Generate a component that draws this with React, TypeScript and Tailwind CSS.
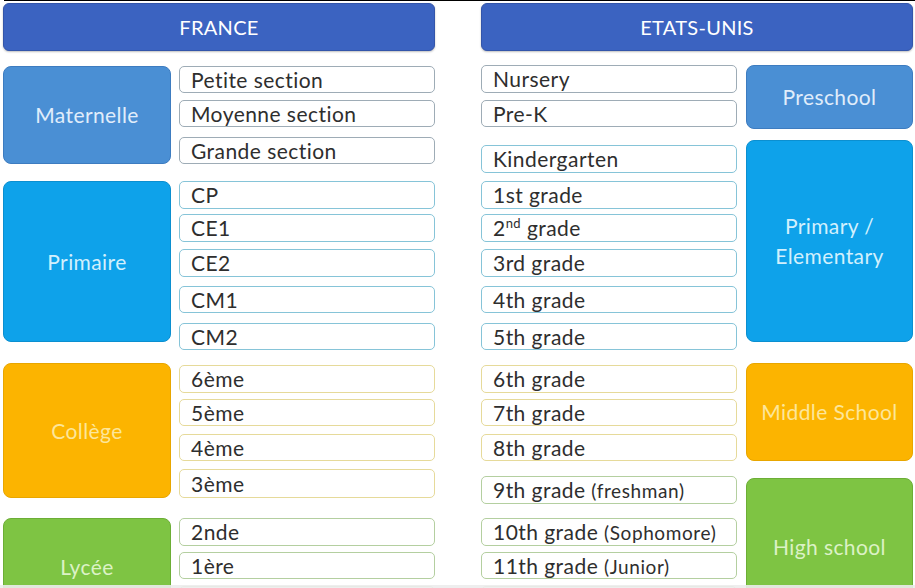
import React from 'react';

type Item = { text: React.ReactNode; cls: string };
type Group = {
  label: React.ReactNode;
  wrap: string;
  box: string;
  boxText: string;
  itemBorder: string;
  items: Item[];
  itemsWrap: string;
};

const leftGroups: Group[] = [
  {
    label: 'Maternelle',
    wrap: 'mt-[15px]',
    box: 'h-[98px] bg-[#4a8fd4] border-[#3d7cc0]',
    boxText: 'text-[#e0edfb]',
    itemBorder: 'border-[#9eacb6]',
    itemsWrap: '',
    items: [
      { text: 'Petite section', cls: 'h-[27px]' },
      { text: 'Moyenne section', cls: 'h-[27px] mt-[7px]' },
      { text: 'Grande section', cls: 'h-[27px] mt-[10px]' },
    ],
  },
  {
    label: 'Primaire',
    wrap: 'mt-[17px]',
    box: 'h-[161px] bg-[#0ea2ea] border-[#0b8fd0]',
    boxText: 'text-[#d2f0fd]',
    itemBorder: 'border-[#86c4d8]',
    itemsWrap: '',
    items: [
      { text: 'CP', cls: 'h-[28px]' },
      { text: 'CE1', cls: 'h-[28px] mt-[5px]' },
      { text: 'CE2', cls: 'h-[28px] mt-[7px]' },
      { text: 'CM1', cls: 'h-[27px] mt-[9px]' },
      { text: 'CM2', cls: 'h-[27px] mt-[10px]' },
    ],
  },
  {
    label: 'Collège',
    wrap: 'mt-[13px]',
    box: 'h-[135px] bg-[#fcb400] border-[#e8a600]',
    boxText: 'text-[#fde69a]',
    itemBorder: 'border-[#e6da9a]',
    itemsWrap: 'mt-[2px]',
    items: [
      { text: '6ème', cls: 'h-[28px]' },
      { text: '5ème', cls: 'h-[27px] mt-[6px]' },
      { text: '4ème', cls: 'h-[27px] mt-[8px]' },
      { text: '3ème', cls: 'h-[29px] mt-[8px]' },
    ],
  },
  {
    label: 'Lycée',
    wrap: 'mt-[20px]',
    box: 'h-[97px] bg-[#7ec443] border-[#6cae36]',
    boxText: 'text-[#dcf2c6]',
    itemBorder: 'border-[#b4cfa0]',
    itemsWrap: '',
    items: [
      { text: '2nde', cls: 'h-[28px]' },
      { text: '1ère', cls: 'h-[27px] mt-[6px]' },
      { text: '', cls: 'h-[27px] mt-[7px]' },
    ],
  },
];

const small = (s: string) => <span className="text-[19px] tracking-[0.6px]">{s}</span>;

const rightGroups: Group[] = [
  {
    label: 'Preschool',
    wrap: 'mt-[14px]',
    box: 'h-[64px] bg-[#4a8fd4] border-[#3d7cc0]',
    boxText: 'text-[#e0edfb]',
    itemBorder: 'border-[#9eacb6]',
    itemsWrap: '',
    items: [
      { text: 'Nursery', cls: 'h-[28px]' },
      { text: 'Pre-K', cls: 'h-[27px] mt-[7px]' },
    ],
  },
  {
    label: (
      <>
        Primary /<br />
        Elementary
      </>
    ),
    wrap: 'mt-[11px]',
    box: 'h-[202px] bg-[#0ea2ea] border-[#0b8fd0]',
    boxText: 'text-[#d2f0fd]',
    itemBorder: 'border-[#86c4d8]',
    itemsWrap: 'mt-[5px]',
    items: [
      { text: 'Kindergarten', cls: 'h-[28px]' },
      { text: '1st grade', cls: 'h-[28px] mt-[8px]' },
      {
        text: (
          <>
            2<sup className="text-[13px] -top-[0.6em]">nd</sup> grade
          </>
        ),
        cls: 'h-[28px] mt-[5px]',
      },
      { text: '3rd grade', cls: 'h-[28px] mt-[7px]' },
      { text: '4th grade', cls: 'h-[27px] mt-[9px]' },
      { text: '5th grade', cls: 'h-[27px] mt-[10px]' },
    ],
  },
  {
    label: 'Middle School',
    wrap: 'mt-[13px]',
    box: 'h-[98px] bg-[#fcb400] border-[#e8a600]',
    boxText: 'text-[#fde69a]',
    itemBorder: 'border-[#e6da9a]',
    itemsWrap: 'mt-[2px]',
    items: [
      { text: '6th grade', cls: 'h-[28px]' },
      { text: '7th grade', cls: 'h-[27px] mt-[6px]' },
      { text: '8th grade', cls: 'h-[27px] mt-[8px]' },
    ],
  },
  {
    label: 'High school',
    wrap: 'mt-[15px]',
    box: 'h-[137px] mt-[2px] bg-[#7ec443] border-[#6cae36]',
    boxText: 'text-[#dcf2c6]',
    itemBorder: 'border-[#b4cfa0]',
    itemsWrap: '',
    items: [
      { text: <>9th grade {small('(freshman)')}</>, cls: 'h-[28px]' },
      { text: <>10th grade {small('(Sophomore)')}</>, cls: 'h-[28px] mt-[14px]' },
      { text: <>11th grade {small('(Junior)')}</>, cls: 'h-[27px] mt-[6px]' },
      { text: '', cls: 'h-[27px] mt-[7px]' },
    ],
  },
];

const Box = ({ g, width }: { g: Group; width: string }) => (
  <div
    className={`${width} ${g.box} shrink-0 rounded-[8px] border flex items-center justify-center text-center text-[21px] tracking-[0.4px] leading-[30px] ${g.boxText}`}
  >
    {g.label}
  </div>
);

const Items = ({ g }: { g: Group }) => (
  <div className={`w-[256px] shrink-0 flex flex-col ${g.itemsWrap}`}>
    {g.items.map((it, i) => (
      <div
        key={i}
        className={`${it.cls} ${g.itemBorder} border-[1.5px] rounded-[5px] bg-white flex items-center pl-[11px] text-[21px] tracking-[0.45px] text-[#2e2e2e] whitespace-nowrap`}
      >
        <span>{it.text}</span>
      </div>
    ))}
  </div>
);

const Header = ({ title }: { title: string }) => (
  <div className="h-[48px] rounded-[6px] bg-[#3b63c1] border border-[#3355aa] flex items-center justify-center text-white text-[20px] tracking-[0.3px] shadow-[0_1px_2px_rgba(0,0,0,0.25)]">
    {title}
  </div>
);

export default function App() {
  return (
    <div
      className="relative w-[915px] h-[588px] overflow-hidden bg-white"
      style={{ fontFamily: 'Lato, "Open Sans", sans-serif' }}
    >
      <div className="flex gap-[46px] pl-[3px] pt-[3px]">
        <div className="w-[432px] flex flex-col">
          <Header title="FRANCE" />
          {leftGroups.map((g, i) => (
            <div key={i} className={`flex items-start gap-[8px] ${g.wrap}`}>
              <Box g={g} width="w-[168px]" />
              <Items g={g} />
            </div>
          ))}
        </div>
        <div className="w-[432px] flex flex-col">
          <Header title="ETATS-UNIS" />
          {rightGroups.map((g, i) => (
            <div key={i} className={`flex items-start gap-[9px] ${g.wrap}`}>
              <Items g={g} />
              <Box g={g} width="w-[167px]" />
            </div>
          ))}
        </div>
      </div>
      <div className="absolute top-0 left-[4px] right-0 h-[1px] bg-black" />
      <div className="absolute bottom-0 left-0 right-0 h-[3px] bg-[#ececec]/90" />
    </div>
  );
}
